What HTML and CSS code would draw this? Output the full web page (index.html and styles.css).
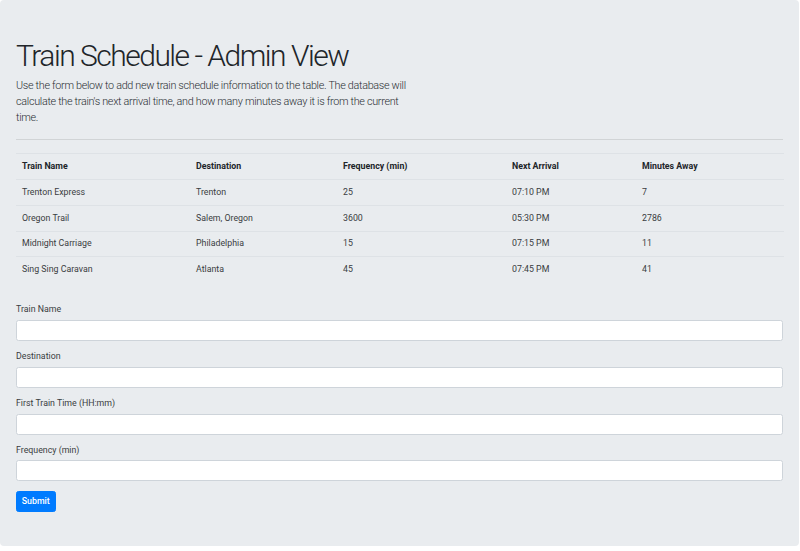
FILE: index.html
```html
<!DOCTYPE html>
<html lang="en">
<head>
<meta charset="utf-8">
<title>Train Schedule - Admin View</title>
<link rel="stylesheet" href="styles.css">
</head>
<body>
<div class="jumbotron">
  <h1 class="title">Train Schedule - Admin View</h1>
  <p class="lead">Use the form below to add new train schedule information to the table. The database will calculate the train's next arrival time, and how many minutes away it is from the current time.</p>
  <hr class="divider">
  <table class="schedule">
    <thead>
      <tr>
        <th class="c1">Train Name</th>
        <th class="c2">Destination</th>
        <th class="c3">Frequency (min)</th>
        <th class="c4">Next Arrival</th>
        <th class="c5">Minutes Away</th>
      </tr>
    </thead>
    <tbody>
      <tr><td>Trenton Express</td><td>Trenton</td><td>25</td><td>07:10 PM</td><td>7</td></tr>
      <tr><td>Oregon Trail</td><td>Salem, Oregon</td><td>3600</td><td>05:30 PM</td><td>2786</td></tr>
      <tr><td>Midnight Carriage</td><td>Philadelphia</td><td>15</td><td>07:15 PM</td><td>11</td></tr>
      <tr><td>Sing Sing Caravan</td><td>Atlanta</td><td>45</td><td>07:45 PM</td><td>41</td></tr>
    </tbody>
  </table>
  <form class="train-form">
    <div class="form-group">
      <label class="form-label" for="name">Train Name</label>
      <input class="form-input" id="name" type="text">
    </div>
    <div class="form-group">
      <label class="form-label" for="dest">Destination</label>
      <input class="form-input" id="dest" type="text">
    </div>
    <div class="form-group">
      <label class="form-label" for="first">First Train Time (HH:mm)</label>
      <input class="form-input" id="first" type="text">
    </div>
    <div class="form-group">
      <label class="form-label" for="freq">Frequency (min)</label>
      <input class="form-input" id="freq" type="text">
    </div>
    <button class="btn-submit" type="button">Submit</button>
  </form>
</div>
</body>
</html>
```
FILE: styles.css
```css
* { box-sizing: border-box; }
html, body { margin: 0; padding: 0; background: #fff; }
body {
  font-family: Roboto, Inter, "Liberation Sans", sans-serif;
  color: #212529;
  font-size: 8.8px;
  line-height: 1.5;
}
.jumbotron {
  width: 799px;
  background: #e9ecef;
  border-radius: 4px;
  padding: 37.5px 16px 34px 16px;
}
.title {
  margin: 0 0 4.4px 0;
  font-size: 30px;
  font-weight: 300;
  line-height: 36px;
  letter-spacing: -1.5px;
}
.lead {
  margin: 0;
  max-width: 396px;
  font-size: 10.8px;
  line-height: 16px;
  font-weight: 300;
  letter-spacing: -0.3px;
  color: #2a2e33;
}
.divider {
  margin: 13.5px 0 13px 0;
  border: 0;
  border-top: 1px solid rgba(0,0,0,0.1);
  height: 0;
}
.schedule {
  width: 100%;
  border-collapse: collapse;
  table-layout: fixed;
  color: #3a3d41;
}
.schedule th, .schedule td {
  text-align: left;
  padding: 5.75px 6px;
  line-height: 13.2px;
  border-top: 1px solid #dee2e6;
  vertical-align: top;
}
.schedule th { font-weight: 700; color: #212529; }
.c1 { width: 174px; }
.c2 { width: 147px; }
.c3 { width: 169px; }
.c4 { width: 130px; }
.c5 { width: 148px; }
.train-form { margin-top: 21.5px; }
.form-group { margin-bottom: 9.3px; }
.form-label {
  display: block;
  margin-bottom: 3.3px;
  line-height: 13.2px;
  color: #3a3d41;
}
.form-input {
  display: block;
  width: 100%;
  height: 21px;
  background: #fff;
  border: 1px solid #ced4da;
  border-radius: 2.5px;
  padding: 3px 6.6px;
  font: inherit;
}
.btn-submit {
  display: inline-block;
  height: 21px;
  padding: 3px 4.8px;
  background: #007bff;
  border: 1px solid #007bff;
  border-radius: 2.5px;
  color: #fff;
  font-family: inherit;
  font-size: 8.8px;
  font-weight: 500;
  line-height: 13.2px;
}
```
